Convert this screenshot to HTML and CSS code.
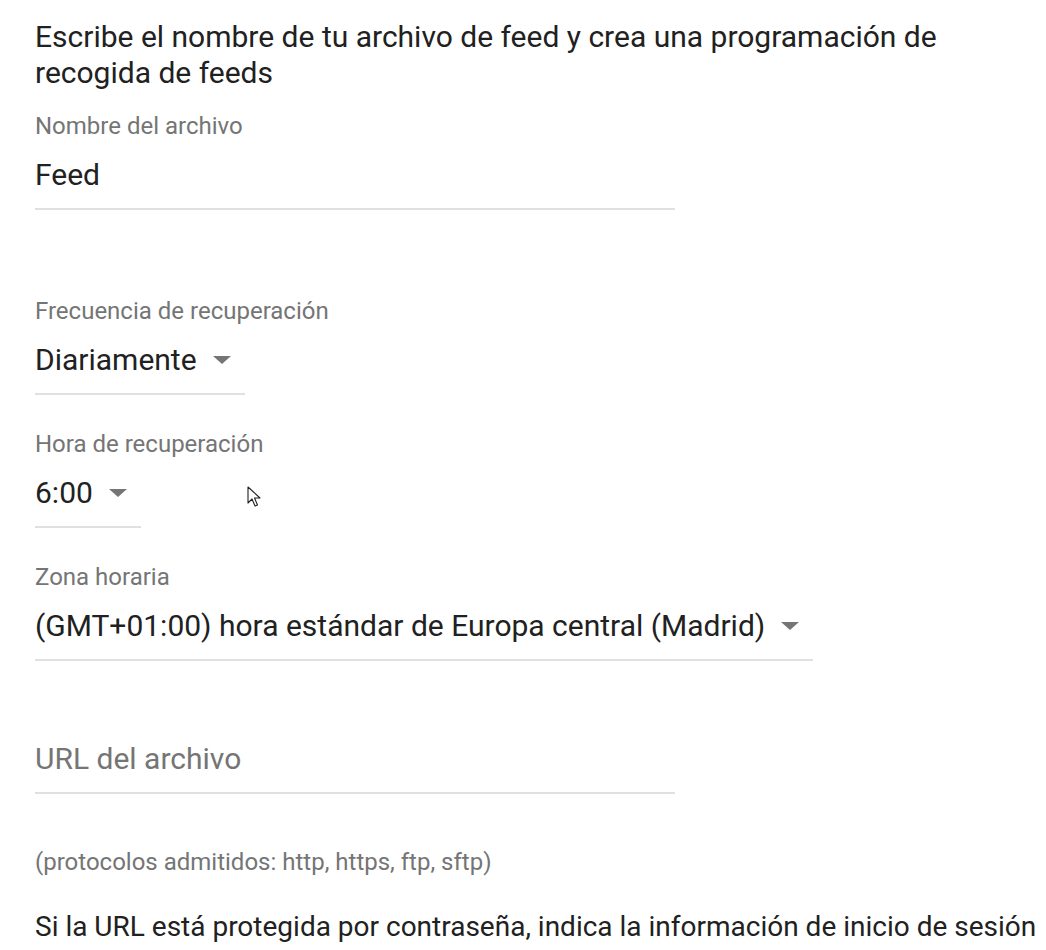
FILE: index.html
```html
<!DOCTYPE html>
<html lang="es">
<head>
<meta charset="utf-8">
<title>Feed</title>
<link rel="stylesheet" href="styles.css">
</head>
<body>
<main class="form">
  <h2 class="intro">Escribe el nombre de tu archivo de feed y crea una programación de recogida de feeds</h2>

  <div class="field field-name">
    <div class="label">Nombre del archivo</div>
    <div class="control wide">Feed</div>
  </div>

  <div class="field field-freq">
    <div class="label">Frecuencia de recuperación</div>
    <div class="control select">Diariamente<span class="caret"></span></div>
  </div>

  <div class="field">
    <div class="label">Hora de recuperación</div>
    <div class="control select">6:00<span class="caret"></span></div>
  </div>

  <div class="field">
    <div class="label">Zona horaria</div>
    <div class="control select">(GMT+01:00) hora estándar de Europa central (Madrid)<span class="caret"></span></div>
  </div>

  <div class="field field-url">
    <div class="label"></div>
    <div class="control wide placeholder">URL del archivo</div>
  </div>

  <p class="hint">(protocolos admitidos: http, https, ftp, sftp)</p>
  <p class="note">Si la URL está protegida por contraseña, indica la información de inicio de sesión</p>

  <svg class="cursor" width="14" height="22" viewBox="0 0 14 22"><path d="M1 1 L1 17 L5 13 L8 20 L10.5 19 L7.5 12 L13 12 Z" fill="#fff" stroke="#222" stroke-width="1.1" stroke-linejoin="round"/></svg>
</main>
</body>
</html>
```

FILE: styles.css
```css
html, body {
  margin: 0;
  padding: 0;
  background: #ffffff;
}

body {
  font-family: Roboto, "Liberation Sans", Arial, sans-serif;
  color: #212121;
}

.form {
  position: relative;
  padding: 19px 0 0 35px;
  display: flex;
  flex-direction: column;
  align-items: flex-start;
}

.intro {
  margin: 0;
  font-size: 30px;
  font-weight: 400;
  line-height: 36px;
  width: 960px;
  color: #212121;
}

.field {
  display: flex;
  flex-direction: column;
  align-items: flex-start;
  margin-top: 35px;
}

.field-name {
  margin-top: 21px;
}

.field-freq {
  margin-top: 87px;
}

.label {
  font-size: 24px;
  line-height: 28px;
  height: 28px;
  color: #757575;
}

.control {
  display: flex;
  align-items: center;
  font-size: 30px;
  line-height: 40px;
  padding: 15px 14px 13px 0;
  border-bottom: 2px solid #e0e0e0;
  color: #212121;
  white-space: nowrap;
}

.control.wide {
  width: 640px;
  box-sizing: border-box;
}

.caret {
  width: 0;
  height: 0;
  margin-left: 16px;
  border-left: 9px solid transparent;
  border-right: 9px solid transparent;
  border-top: 8px solid #757575;
}

.placeholder {
  color: #757575;
}

.hint {
  margin: 54px 0 0;
  font-size: 24px;
  line-height: 28px;
  color: #757575;
}

.note {
  margin: 33px 0 0;
  font-size: 28px;
  line-height: 36px;
  color: #212121;
  white-space: nowrap;
}

.cursor {
  position: absolute;
  left: 247px;
  top: 486px;
}
```
